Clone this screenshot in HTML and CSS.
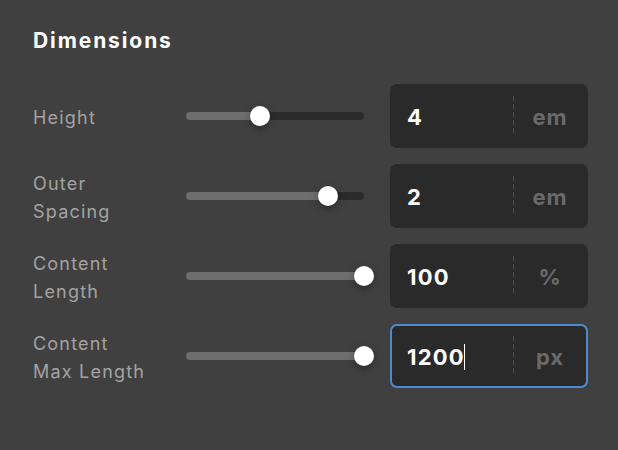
FILE: index.html
```html
<!DOCTYPE html>
<html lang="en">
<head>
    <meta charset="UTF-8">
    <title>Dimensions</title>
    <link rel="stylesheet" href="styles.css">
</head>
<body>
    <div class="panel">
        <h2>Dimensions</h2>
        <div class="rows">
            <div class="row">
                <div class="label">Height</div>
                <div class="slider"><div class="fill" style="width: 74px"></div><div class="thumb" style="left: 74px"></div></div>
                <div class="field"><span class="value">4</span><span class="unit">em</span></div>
            </div>
            <div class="row">
                <div class="label">Outer<br>Spacing</div>
                <div class="slider"><div class="fill" style="width: 142px"></div><div class="thumb" style="left: 142px"></div></div>
                <div class="field"><span class="value">2</span><span class="unit">em</span></div>
            </div>
            <div class="row">
                <div class="label">Content<br>Length</div>
                <div class="slider"><div class="fill" style="width: 178px"></div><div class="thumb" style="left: 178px"></div></div>
                <div class="field"><span class="value">100</span><span class="unit">%</span></div>
            </div>
            <div class="row">
                <div class="label">Content<br>Max Length</div>
                <div class="slider"><div class="fill" style="width: 178px"></div><div class="thumb" style="left: 178px"></div></div>
                <div class="field focused"><span class="value">1200<span class="caret"></span></span><span class="unit">px</span></div>
            </div>
        </div>
    </div>
</body>
</html>
```
FILE: styles.css
```css
body {
    margin: 0;
    background-color: #404040;
    font-family: Inter, "Noto Sans", sans-serif;
    color: #fff;
}
.panel {
    padding: 28px 30px 0 33px;
}
h2 {
    margin: 0 0 30px;
    font-size: 21px;
    font-weight: 700;
    line-height: 26px;
    letter-spacing: 1.9px;
}
.rows {
    display: flex;
    flex-direction: column;
    gap: 16px;
}
.row {
    display: grid;
    grid-template-columns: 153px 204px 198px;
    align-items: center;
    height: 64px;
}
.label {
    padding-top: 3px;
    color: #a3a3a3;
    font-size: 18px;
    line-height: 28px;
    letter-spacing: 1.2px;
}
.slider {
    position: relative;
    width: 178px;
    height: 8px;
    border-radius: 4px;
    background-color: #2b2b2b;
}
.fill {
    height: 100%;
    border-radius: 4px;
    background-color: #6e6e6e;
}
.thumb {
    position: absolute;
    top: 50%;
    width: 20px;
    height: 20px;
    margin: -10px 0 0 -10px;
    border-radius: 50%;
    background-color: #fff;
    box-shadow: 0 3px 8px rgba(0,0,0,0.35);
}
.field {
    display: flex;
    align-items: center;
    height: 64px;
    box-sizing: border-box;
    border: 2px solid transparent;
    border-radius: 7px;
    background-color: #2a2a2a;
}
.field.focused {
    border-color: #4a8bd4;
}
.value {
    flex: 1;
    display: flex;
    align-items: center;
    height: 40px;
    padding: 2px 0 0 15px;
    box-sizing: border-box;
    background: repeating-linear-gradient(to bottom, #4c4c4c 0 5px, transparent 5px 8px) right top / 1px 100% no-repeat;
    font-size: 22px;
    font-weight: 700;
    letter-spacing: 1.2px;
}
.caret {
    display: inline-block;
    width: 1.5px;
    height: 26px;
    margin-left: -1px;
    background-color: #fff;
}
.unit {
    width: 72px;
    padding-top: 2px;
    text-align: center;
    color: #6a6a6a;
    font-size: 22px;
    font-weight: 700;
    letter-spacing: 0.8px;
}
```
